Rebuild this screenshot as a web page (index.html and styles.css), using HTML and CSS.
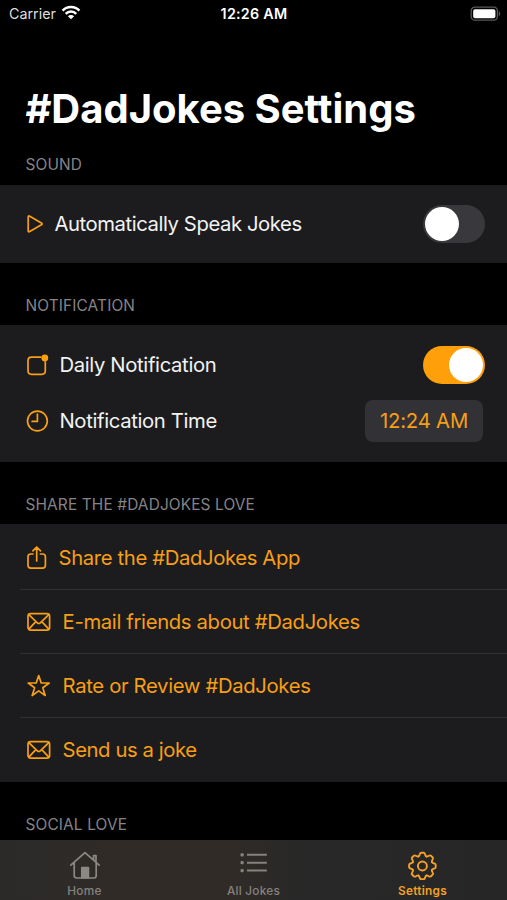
FILE: index.html
```html
<!DOCTYPE html>
<html lang="en">
<head>
<meta charset="utf-8">
<title>#DadJokes Settings</title>
<link rel="stylesheet" href="styles.css">
</head>
<body>
<div class="screen">
  <header class="status">
    <div class="carrier"><span class="carrier-name">Carrier</span>
      <svg class="wifi" viewBox="0 0 20 15" width="20" height="15"><g fill="none" stroke="#fff" stroke-width="2.5"><path d="M1.6 5.6A11.8 11.8 0 0 1 18.4 5.6"/><path d="M4.7 8.8A7.4 7.4 0 0 1 15.3 8.8"/></g><path d="M6.9 11.2a4.4 4.4 0 0 1 6.2 0L10 14.3z" fill="#fff"/></svg>
    </div>
    <div class="clock">12:26 AM</div>
    <svg class="battery" viewBox="0 0 32 16" width="32" height="16"><rect x="1.2" y="1.2" width="26.2" height="13" rx="3.6" fill="#000" stroke="#59595b" stroke-width="1.3"/><rect x="3.2" y="3.2" width="22.2" height="9" rx="1.8" fill="#fff"/><path d="M28.8 5.3c1.8.6 1.8 4.2 0 4.8z" fill="#59595b"/></svg>
  </header>

  <main class="content">
    <h1 class="title">#DadJokes Settings</h1>

    <h2 class="section-title t-sound">Sound</h2>
    <section class="group sound">
      <div class="row">
        <svg class="icon" viewBox="0 0 18 20" width="18" height="20"><path d="M2.2 3.1Q2.2 1.3 3.8 2.2L15.4 8.9Q16.8 9.9 15.4 10.8L3.8 17.5Q2.2 18.4 2.2 16.7z"/></svg>
        <span class="label l-auto">Automatically Speak Jokes</span>
        <span class="switch"><i class="knob"></i></span>
      </div>
    </section>

    <h2 class="section-title t-notif">Notification</h2>
    <section class="group notif">
      <div class="row">
        <svg class="icon" viewBox="0 0 23 24" width="23" height="24"><path d="M14.8 4.1H5.5Q2 4.1 2 7.6V17.8Q2 21.3 5.5 21.3H15.8Q19.3 21.3 19.3 17.8V8.8"/><circle class="solid" cx="18.8" cy="5" r="3.4"/></svg>
        <span class="label l-daily">Daily Notification</span>
        <span class="switch on"><i class="knob"></i></span>
      </div>
      <div class="row">
        <svg class="icon" viewBox="0 0 23 24" width="23" height="24"><circle cx="11.4" cy="12" r="9.9"/><path d="M11.4 5.2V12.4H6.1"/></svg>
        <span class="label l-time">Notification Time</span>
        <span class="time">12:24 AM</span>
      </div>
    </section>

    <h2 class="section-title t-share">Share the #DadJokes Love</h2>
    <section class="group links">
      <a class="row link">
        <svg class="icon" viewBox="0 0 22 26" width="22" height="26"><path d="M7 9H4.8Q2 9 2 11.8V20.3Q2 23.1 4.8 23.1H16.6Q19.4 23.1 19.4 20.3V11.8Q19.4 9 16.6 9H14.4M10.7 16V2.6M6.9 5.8L10.7 2L14.5 5.8"/></svg>
        <span class="label l-app">Share the #DadJokes App</span>
      </a>
      <a class="row link">
        <svg class="icon mail" viewBox="0 0 26 20" width="26" height="20"><rect x="2" y="1.6" width="21.6" height="16.6" rx="2.6"/><path d="M2.8 2.6L11.3 10.8Q12.8 12.1 14.3 10.8L22.8 2.6M2.8 17.2L9.8 9.7M22.8 17.2L15.8 9.7"/></svg>
        <span class="label l-mail">E-mail friends about #DadJokes</span>
      </a>
      <a class="row link">
        <svg class="icon" viewBox="0 0 26 26" width="26" height="26"><path d="M12.7 2.5L15.2 10H23.2L16.8 14.7L19.2 22.5L12.7 17.9L6.2 22.5L8.6 14.7L2.2 10H10.2z"/></svg>
        <span class="label l-rate">Rate or Review #DadJokes</span>
      </a>
      <a class="row link">
        <svg class="icon mail" viewBox="0 0 26 20" width="26" height="20"><rect x="2" y="1.6" width="21.6" height="16.6" rx="2.6"/><path d="M2.8 2.6L11.3 10.8Q12.8 12.1 14.3 10.8L22.8 2.6M2.8 17.2L9.8 9.7M22.8 17.2L15.8 9.7"/></svg>
        <span class="label l-send">Send us a joke</span>
      </a>
    </section>

    <h2 class="section-title t-social">Social Love</h2>
  </main>

  <nav class="tabs">
    <a class="tab">
      <svg viewBox="0 0 32 30" width="32" height="30" fill="none" stroke="#8c8884" stroke-width="1.7" stroke-linejoin="round" stroke-linecap="round"><path d="M1.8 15.2L16 2.6L30.2 15.2M5.2 12.8V25.6Q5.2 28 7.6 28H24.8Q27.2 28 27.2 25.6V12.8M24.6 9.5V5.6H27V11.8"/><path d="M12.8 17.6H19.4V27.6H12.8z" fill="#8c8884"/></svg>
      <span class="t-home">Home</span>
    </a>
    <a class="tab">
      <svg viewBox="0 0 32 30" width="32" height="30" fill="#85827f"><rect x="2.5" y="3.2" width="3.2" height="3.2" rx="1"/><rect x="2.5" y="11.1" width="3.2" height="3.2" rx="1"/><rect x="2.5" y="19" width="3.2" height="3.2" rx="1"/><path d="M9 3.8H28.8V5.8H9zM9 11.7H28.8V13.7H9zM9 19.6H28.8V21.6H9z"/></svg>
      <span class="t-all">All Jokes</span>
    </a>
    <a class="tab active">
      <svg viewBox="-15.4 -16 32 30" width="32" height="30" fill="none" stroke="#f3a027" stroke-width="1.9" stroke-linecap="round"><defs><path id="tooth" d="M-3.94-9.52Q-3.1-9.86-2.8-11.3Q-2.4-13.3-1.3-13.3H1.3Q2.4-13.3 2.8-11.3Q3.1-9.86 3.94-9.52"/></defs><use href="#tooth"/><use href="#tooth" transform="rotate(45)"/><use href="#tooth" transform="rotate(90)"/><use href="#tooth" transform="rotate(135)"/><use href="#tooth" transform="rotate(180)"/><use href="#tooth" transform="rotate(225)"/><use href="#tooth" transform="rotate(270)"/><use href="#tooth" transform="rotate(315)"/><circle r="4.5"/></svg>
      <span class="t-set">Settings</span>
    </a>
  </nav>
</div>
</body>
</html>
```
FILE: styles.css
```css
* { box-sizing: border-box; }
body { margin: 0; background: #000; font-family: Inter, "Liberation Sans", sans-serif; }
.screen { width: 507px; height: 900px; display: flex; flex-direction: column; overflow: hidden; background: #000; color: #fff; }
.status { height: 28px; flex: none; display: grid; grid-template-columns: 1fr auto 1fr; align-items: center; padding: 0 5px 0 9px; font-size: 14.3px; line-height: 28px; }
.carrier { display: flex; align-items: center; gap: 5px; color: #ddd; }
.carrier svg { margin-top: -3px; }
.clock { font-weight: 600; letter-spacing: 0.25px; margin-left: -3px; }
.battery { justify-self: end; margin-top: -1px; }
.content { flex: 1; min-height: 0; display: flex; flex-direction: column; }
.title { margin: 56px 0 0 25.4px; height: 50px; line-height: 50px; font-size: 40px; font-weight: 700; white-space: nowrap; }
.section-title { margin: 0; padding-left: 25.5px; flex: none; font-size: 15.4px; font-weight: 400; letter-spacing: 0.14px; color: #848488; text-transform: uppercase; line-height: 20px; white-space: nowrap; }
.t-sound { height: 51px; padding-top: 21px; }
.t-notif, .t-share { height: 62px; padding-top: 33px; }
.t-social { height: 58px; padding-top: 33px; }
.group { background: #1c1c1e; flex: none; padding-left: 26px; }
.sound { height: 78px; }
.notif { height: 137px; padding-top: 12px; }
.links { height: 258px; padding-left: 20px; }
.row { display: flex; align-items: center; height: 56px; padding-right: 22px; }
.sound .row { height: 78px; }
.link { height: 64px; padding-left: 6px; color: #f79f16; }
.link + .link { border-top: 1px solid #303032; }
.links .link:first-child { height: 65px; padding-top: 2px; }
.icon { flex: none; fill: none; stroke: #f79f16; stroke-width: 1.7; stroke-linejoin: round; stroke-linecap: round; }
.icon .solid { fill: #ff9f0a; stroke: none; }
.label { font-size: 20.3px; line-height: 28px; white-space: nowrap; margin-left: 10.4px; letter-spacing: -0.35px; color: #f2f2f3; }
.l-auto { letter-spacing: -0.43px; }
.link .label { margin-left: 10.6px; color: inherit; }
.link .l-app { letter-spacing: -0.38px; }
.l-send { letter-spacing: -0.43px; }
.switch { margin-left: auto; width: 62px; height: 38px; border-radius: 19px; background: #39393d; padding: 2px; display: flex; }
.knob { width: 34px; height: 34px; border-radius: 50%; background: #fff; }
.switch.on { background: #ff9f0a; justify-content: flex-end; }
.time { margin-left: auto; margin-right: 2px; width: 118px; height: 42px; border-radius: 8px; background: #323236; color: #f79f16; font-size: 20.3px; letter-spacing: -0.2px; line-height: 42px; text-align: center; }
.tabs { height: 60px; flex: none; display: grid; grid-template-columns: repeat(3, 1fr); background: linear-gradient(90deg, #2b2a29 0, #302b27 25%, #302b27 45%, #282828 60%, #262627 100%); }
.tab { display: flex; flex-direction: column; align-items: center; padding-top: 10px; font-size: 11.8px; font-weight: 500; line-height: 16px; letter-spacing: 0.25px; color: #85827f; }
.tab svg { flex: none; margin-bottom: 3px; }
.active { color: #f3a027; font-weight: 600; }
```
